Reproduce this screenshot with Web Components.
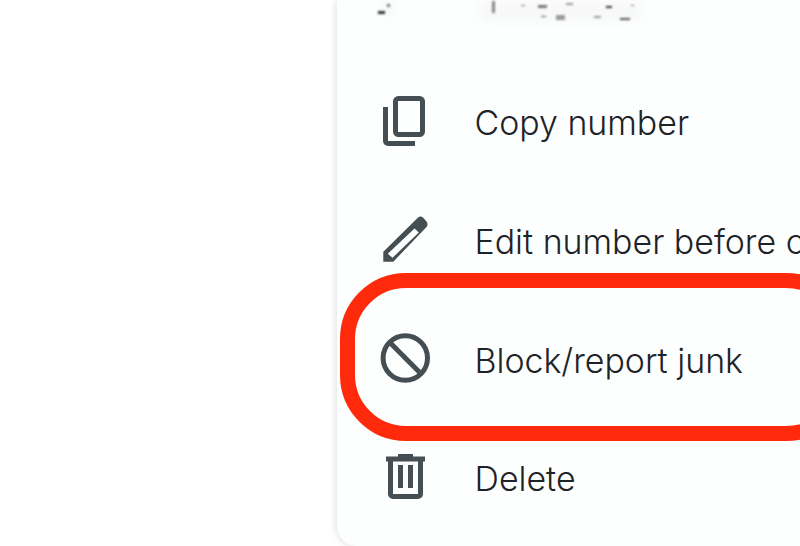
<!DOCTYPE html>
<html><head><meta charset="utf-8"><style>html,body{margin:0;height:100%;background:#fff;overflow:hidden}</style></head><body>
<call-screen>
<menu-sheet>
<redacted-line></redacted-line>
<menu-row label="Copy number"><svg viewBox="0 0 60 60" fill="none" stroke="#454f53" stroke-width="5"><rect x="20.5" y="6.5" width="27" height="36" rx="3"/><path d="M10.5 15V49a2.5 2.5 0 0 0 2.5 2.5H40"/></svg></menu-row>
<menu-row label="Edit number before calling"><svg viewBox="0 0 60 60" fill="#454f53"><path fill-rule="evenodd" d="M8.3 50.7V40.700L43.300 6.300Q45.500 4.500 48 6.500L51.500 10.500Q53.500 13 51.500 16L18.300 50.700ZM12.800 42.800L17.500 46.800L43.800 21.500L39.500 17.500Z"/></svg></menu-row>
<menu-row label="Block/report junk"><svg viewBox="0 0 60 60" fill="none" stroke="#454f53" stroke-width="5"><circle cx="30.3" cy="28" r="22.2"/><path d="M14.6 12.3L46 43.7"/></svg></menu-row>
<menu-row label="Delete"><svg viewBox="0 0 60 60" fill="none" stroke="#454f53" stroke-width="5"><path d="M11 11H50M23 8.500H38"/><path d="M15.500 11V46a2.500 2.500 0 0 0 2.500 2.500H43a2.500 2.500 0 0 0 2.500-2.500V11"/><path d="M25.500 17V40M35.500 17V40"/></svg></menu-row>
<focus-ring></focus-ring>
</menu-sheet>
</call-screen>
<script>
function def(name, html, after){
  customElements.define(name, class extends HTMLElement{
    constructor(){super();this.attachShadow({mode:'open'}).innerHTML=html;}
    connectedCallback(){ if(after) after(this); }
  });
}
def('call-screen',`<style>:host{display:flex;justify-content:flex-end;width:800px;height:546px;overflow:hidden;background:#fff}</style><slot></slot>`);
def('menu-sheet',`<style>:host{display:flex;flex-direction:column;position:relative;width:463px;height:546px;flex:none;background:#fdfefe;border-bottom-left-radius:20px;box-shadow:-1px 0 7px rgba(0,0,0,.13);font-family:Inter,sans-serif;font-weight:350;color:#1d2327}</style><slot></slot>`);
def('redacted-line',`<style>:host{display:block;height:63px;flex:none}svg{display:block;width:463px;height:40px}</style>
<svg viewBox="337 0 463 40"><defs><filter id="b" x="-100%" y="-100%" width="300%" height="300%"><feGaussianBlur stdDeviation="1"/></filter><filter id="h" x="-50%" y="-50%" width="200%" height="200%"><feGaussianBlur stdDeviation="4"/></filter></defs>
<g fill="#ddd" opacity=".15" filter="url(#h)"><rect x="380" y="2" width="14" height="14"/><rect x="480" y="0" width="160" height="22"/></g>
<g fill="#333" filter="url(#b)"><rect x="378" y="11" width="7" height="3"/><rect x="387" y="4" width="3" height="3" fill="#777"/><rect x="492" y="1" width="3" height="12" fill="#888"/><rect x="521" y="5" width="4" height="1" fill="#777"/><rect x="538" y="5" width="9" height="3" fill="#777"/><rect x="566" y="3" width="7" height="2" fill="#999"/><rect x="606" y="6" width="6" height="2"/><rect x="631" y="5" width="3" height="1" fill="#777"/><rect x="541" y="16" width="5" height="1" fill="#555"/><rect x="556" y="15" width="9" height="5" fill="#999"/><rect x="594" y="16" width="7" height="2" fill="#999"/><rect x="620" y="18" width="10" height="2" fill="#555"/></g></svg>`);
def('menu-row',`<style>:host{display:flex;align-items:center;height:118.7px;flex:none;padding-left:38px;gap:39.5px;white-space:nowrap;overflow:hidden;font-size:33.9px;line-height:44px}
.i{width:60px;height:60px;flex:none;display:block}::slotted(svg){width:60px;height:60px;display:block}
span{padding-top:2px}</style><div class="i"><slot></slot></div><span></span>`, el=>{el.shadowRoot.querySelector('span').textContent=el.getAttribute('label');});
def('focus-ring',`<style>:host{position:absolute;left:3px;top:273px;width:512px;height:168px;box-sizing:border-box;border:15px solid #fe2a0b;border-radius:66px;pointer-events:none}</style>`);
</script>
</body></html>
